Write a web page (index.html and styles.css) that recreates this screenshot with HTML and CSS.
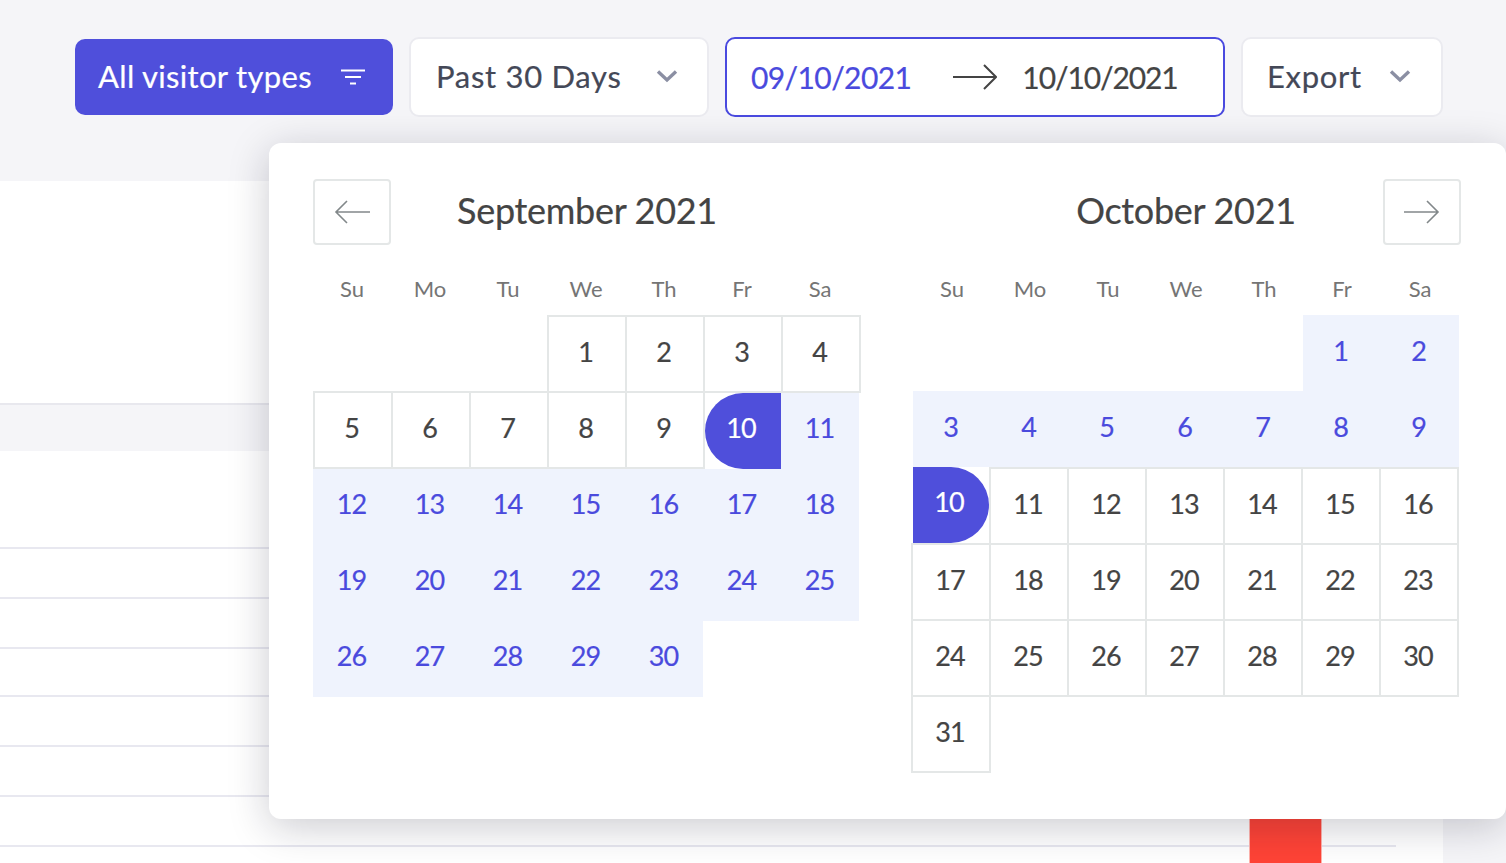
FILE: index.html
```html
<!DOCTYPE html>
<html lang="en">
<head>
<meta charset="utf-8">
<title>Visitors</title>
<link rel="stylesheet" href="styles.css">
</head>
<body>
<div class="page">
  <header class="toolbar">
    <button class="btn btn-primary"><span class="lbl lbl-primary">All visitor types</span>
      <svg class="ico-filter" viewBox="0 0 24 16" width="24" height="16"><path d="M0 1.5h24M4 8h16M9 14.5h6" fill="none" stroke="#fff" stroke-width="2"/></svg>
    </button>
    <button class="btn btn-range"><span class="lbl">Past 30 Days</span>
      <svg class="chev" viewBox="0 0 22 14" width="22" height="14"><path d="M2 2.5l9 8.5 9-8.5" fill="none" stroke="#8b8fa3" stroke-width="3.4"/></svg>
    </button>
    <div class="btn btn-dates">
      <span class="date date-start">09/10/2021</span>
      <svg class="ico-arrow" viewBox="0 0 44 26" width="44" height="26"><path d="M0 13h42M31 1l12 12-12 12" fill="none" stroke="#444" stroke-width="2"/></svg>
      <span class="date date-end">10/10/2021</span>
    </div>
    <button class="btn btn-export"><span class="lbl">Export</span>
      <svg class="chev" viewBox="0 0 22 14" width="22" height="14"><path d="M2 2.5l9 8.5 9-8.5" fill="none" stroke="#8b8fa3" stroke-width="3.4"/></svg>
    </button>
  </header>

  <main class="card">
    <div class="card-head"></div>
    <div class="band"></div>
    <div class="row row-first"></div>
    <div class="row"></div>
    <div class="row"></div>
    <div class="row row-short"></div>
    <div class="row"></div>
    <div class="row"></div>
    <div class="row"></div>
    <div class="bar"></div>
  </main>

  <section class="popup">
    <div class="month">
      <div class="month-head">
        <button class="nav"><svg viewBox="0 0 36 24" width="36" height="24"><path d="M36 12H2M13 1L2 12l11 11" fill="none" stroke="#82888a" stroke-width="1.6"/></svg></button>
        <h2 class="title">September 2021</h2>
        <span></span>
      </div>
      <div class="weekdays"><span>Su</span><span>Mo</span><span>Tu</span><span>We</span><span>Th</span><span>Fr</span><span>Sa</span></div>
      <div class="days days-sep">
        <span class="blank"></span><span class="blank"></span><span class="blank"></span>
        <span class="day">1</span><span class="day">2</span><span class="day">3</span><span class="day">4</span>
        <span class="day">5</span><span class="day">6</span><span class="day">7</span><span class="day">8</span><span class="day">9</span><span class="sel">10</span><span class="rng">11</span>
        <span class="rng">12</span><span class="rng">13</span><span class="rng">14</span><span class="rng">15</span><span class="rng">16</span><span class="rng">17</span><span class="rng">18</span>
        <span class="rng">19</span><span class="rng">20</span><span class="rng">21</span><span class="rng">22</span><span class="rng">23</span><span class="rng">24</span><span class="rng">25</span>
        <span class="rng">26</span><span class="rng">27</span><span class="rng">28</span><span class="rng">29</span><span class="rng">30</span>
      </div>
    </div>
    <div class="month">
      <div class="month-head">
        <span></span>
        <h2 class="title">October 2021</h2>
        <button class="nav nav-next"><svg viewBox="0 0 36 24" width="36" height="24"><path d="M0 12h34M23 1l11 11-11 11" fill="none" stroke="#82888a" stroke-width="1.6"/></svg></button>
      </div>
      <div class="weekdays"><span>Su</span><span>Mo</span><span>Tu</span><span>We</span><span>Th</span><span>Fr</span><span>Sa</span></div>
      <div class="days days-oct">
        <span class="blank"></span><span class="blank"></span><span class="blank"></span><span class="blank"></span><span class="blank"></span>
        <span class="rng">1</span><span class="rng">2</span>
        <span class="rng">3</span><span class="rng">4</span><span class="rng">5</span><span class="rng">6</span><span class="rng">7</span><span class="rng">8</span><span class="rng">9</span>
        <span class="sel">10</span><span class="day">11</span><span class="day">12</span><span class="day">13</span><span class="day">14</span><span class="day">15</span><span class="day">16</span>
        <span class="day">17</span><span class="day">18</span><span class="day">19</span><span class="day">20</span><span class="day">21</span><span class="day">22</span><span class="day">23</span>
        <span class="day">24</span><span class="day">25</span><span class="day">26</span><span class="day">27</span><span class="day">28</span><span class="day">29</span><span class="day">30</span>
        <span class="day">31</span>
      </div>
    </div>
  </section>
</div>
</body>
</html>
```
FILE: styles.css
```css
* { box-sizing: border-box; }
html, body { margin: 0; height: 863px; overflow: hidden; }
body { background: #f5f5f8; font-family: "Lato", "Open Sans", sans-serif; color: #444; }
.page { position: relative; width: 1506px; height: 863px; overflow: hidden; }

.toolbar { display: flex; justify-content: flex-end; align-items: center; gap: 16px; height: 181px; padding: 0 63px 27px 0; }
.btn { display: flex; align-items: center; height: 80px; border: 2px solid #ebebf0; border-radius: 10px; background: #fff; color: #444857; font: inherit; font-size: 31px; padding: 0; }
.btn-primary { height: 76px; width: 318px; background: #4f4fdb; border: 0; color: #fff; padding: 0 28px 0 23px; justify-content: space-between; }
.btn-range { width: 300px; padding: 0 29px 0 25px; justify-content: space-between; }
.btn-dates { width: 500px; border-color: #4a4adf; padding: 0 24px; color: #444; font-size: 30px; }
.btn-export { width: 202px; padding: 0 30px 0 24px; justify-content: space-between; }
.lbl { letter-spacing: .7px; padding-bottom: 3px; -webkit-text-stroke: .2px; }
.lbl-primary { letter-spacing: .32px; }
.date { display: block; -webkit-text-stroke: .2px; }
.date-start { color: #4a4add; letter-spacing: -.6px; }
.date-end { letter-spacing: -1.1px; }
.ico-arrow { margin: 0 25px 0 42px; }
.chev { margin-top: -3px; }

.card { position: relative; width: 1443px; height: 682px; background: #fff; overflow: hidden; }
.card-head { height: 224px; border-bottom: 2px solid #e8e8ee; }
.band { height: 46px; background: #f5f5f8; }
.row { height: 50px; margin-right: 47px; border-bottom: 2px solid #e8e8f0; }
.row-first { height: 98px; }
.row-short { height: 48px; }
.bar { position: absolute; left: 1249px; top: 560px; width: 73px; height: 122px; background: #ff4336; border: solid #ffb3ad; border-width: 0 1px; }

.popup { position: absolute; left: 269px; top: 143px; width: 1237px; height: 676px; display: flex; gap: 52px; padding: 36px 0 0 44px; background: #fff; border-radius: 12px; box-shadow: 0 8px 40px rgba(20, 20, 40, .22); }
.month { width: 548px; }
.month + .month { width: 546px; }
.month-head { display: grid; grid-template-columns: 78px 1fr 78px; height: 66px; align-items: center; }
.title { margin: 0; padding-bottom: 4px; text-align: center; font-size: 36px; font-weight: 400; letter-spacing: -.3px; color: #444; -webkit-text-stroke: .2px; }
.nav { width: 78px; height: 66px; padding: 0; display: flex; align-items: center; justify-content: center; background: #fff; border: 2px solid #e4e7e7; border-radius: 4px; }
.nav-next { margin-left: 2px; }
.weekdays { display: grid; grid-template-columns: repeat(7, 78px); height: 72px; padding-top: 29px; font-size: 22px; color: #757575; text-align: center; line-height: 30px; }
.days { display: grid; grid-template-columns: repeat(7, 78px); grid-auto-rows: 76px; font-size: 27px; letter-spacing: -1px; -webkit-text-stroke: .2px; }
.days-sep { margin-left: 2px; }
.days span { display: flex; align-items: center; justify-content: center; padding-bottom: 6px; }
.days .day { position: relative; z-index: 1; margin: -2px 0 0 -2px; padding: 0 3px 6px 0; border: 2px solid #e4e7e7; color: #444; }
.days-oct .day { padding-right: 2px; }
.days .rng { background: #eff3fd; color: #4a4add; }
.days .sel { background: #4f4fdb; color: #fff; }
.days-sep .rng { margin: 0 2px 0 -2px; padding-right: 1px; padding-bottom: 8px; }
.days-sep .sel { margin-right: 2px; padding-right: 4px; padding-bottom: 8px; border-radius: 38px 0 0 38px; }
.days-oct .rng { margin: -2px 0 2px 0; padding-right: 3px; padding-bottom: 5px; }
.days-oct .sel { position: relative; z-index: 2; margin: -2px 2px 2px 0; padding-right: 4px; padding-bottom: 8px; border-radius: 0 38px 38px 0; }
```
